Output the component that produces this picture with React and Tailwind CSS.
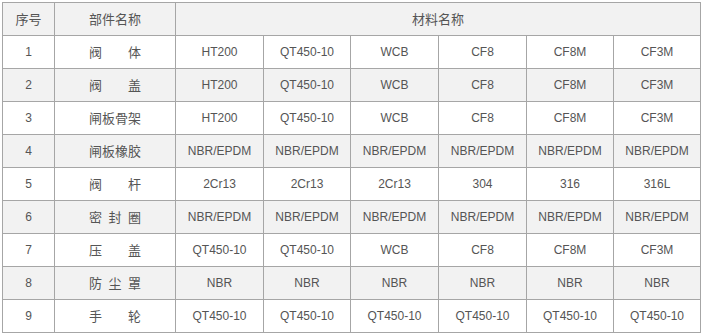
const rows = [
  ['1', ['阀', '体'], ['HT200', 'QT450-10', 'WCB', 'CF8', 'CF8M', 'CF3M']],
  ['2', ['阀', '盖'], ['HT200', 'QT450-10', 'WCB', 'CF8', 'CF8M', 'CF3M']],
  ['3', ['闸板骨架'], ['HT200', 'QT450-10', 'WCB', 'CF8', 'CF8M', 'CF3M']],
  ['4', ['闸板橡胶'], ['NBR/EPDM', 'NBR/EPDM', 'NBR/EPDM', 'NBR/EPDM', 'NBR/EPDM', 'NBR/EPDM']],
  ['5', ['阀', '杆'], ['2Cr13', '2Cr13', '2Cr13', '304', '316', '316L']],
  ['6', ['密', '封', '圈'], ['NBR/EPDM', 'NBR/EPDM', 'NBR/EPDM', 'NBR/EPDM', 'NBR/EPDM', 'NBR/EPDM']],
  ['7', ['压', '盖'], ['QT450-10', 'QT450-10', 'WCB', 'CF8', 'CF8M', 'CF3M']],
  ['8', ['防', '尘', '罩'], ['NBR', 'NBR', 'NBR', 'NBR', 'NBR', 'NBR']],
  ['9', ['手', '轮'], ['QT450-10', 'QT450-10', 'QT450-10', 'QT450-10', 'QT450-10', 'QT450-10']],
]

const cell = 'flex items-center justify-center h-[32px]'
const cjk = "font-['Microsoft_YaHei','Noto_Sans_CJK_SC',sans-serif] text-[13px]"

const PartName = ({ parts }) => {
  if (parts.length === 1) return <span className={cjk}>{parts[0]}</span>
  return (
    <span className={`flex justify-between w-[52px] ${cjk}`}>
      {parts.map((p, i) => <span key={i}>{p}</span>)}
    </span>
  )
}

export default function App() {
  return (
    <div className="bg-white w-[705px] h-[335px] p-[2px] font-['Liberation_Sans',Arial,sans-serif] text-[12px] text-[#555]">
      <div className="grid grid-cols-[51px_120px_87px_86px_87px_87px_86px_86px] gap-px bg-[#a6a6a6] border border-[#a6a6a6] w-[699px]">
        {/* header */}
        <div className={`${cell} bg-[#f2f2f2] ${cjk}`}>序号</div>
        <div className={`${cell} bg-[#f2f2f2] ${cjk}`}>部件名称</div>
        <div className={`${cell} col-span-6 bg-[#f2f2f2] ${cjk}`}>材料名称</div>

        {rows.map(([no, parts, mats], r) => {
          const bg = r % 2 === 1 ? 'bg-[#f2f2f2]' : 'bg-white'
          return [
            <div key={`n${r}`} className={`${cell} ${bg}`}>{no}</div>,
            <div key={`p${r}`} className={`${cell} ${bg}`}><PartName parts={parts} /></div>,
            ...mats.map((m, i) => (
              <div key={`m${r}-${i}`} className={`${cell} ${bg}`}>{m}</div>
            )),
          ]
        })}
      </div>
    </div>
  )
}
